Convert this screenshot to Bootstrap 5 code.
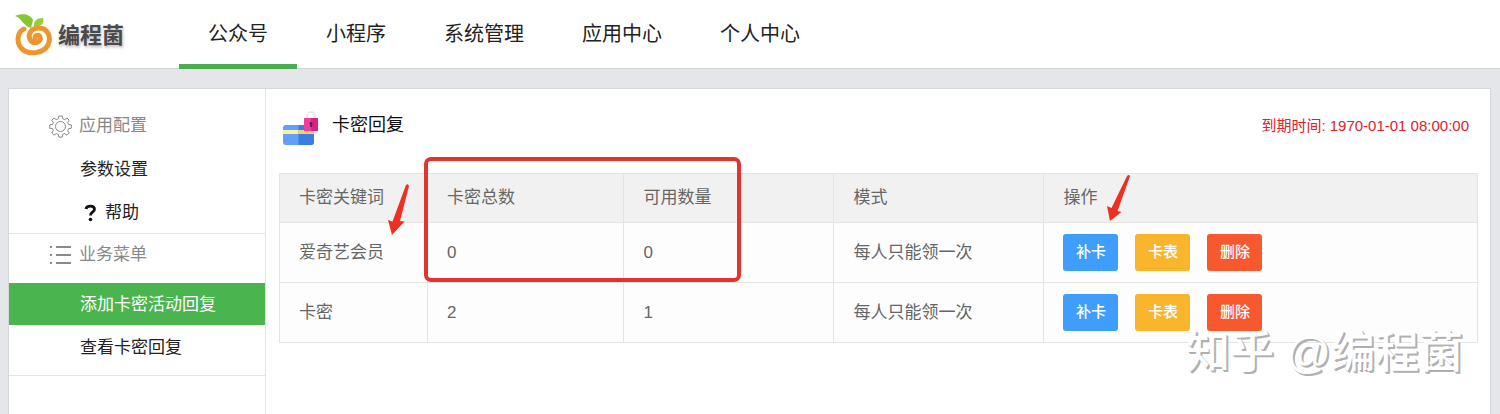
<!DOCTYPE html>
<html lang="zh-CN">
<head>
<meta charset="utf-8">
<meta name="viewport" content="width=device-width, initial-scale=1">
<title>卡密回复</title>
<link href="https://cdn.jsdelivr.net/npm/bootstrap@5.3.0/dist/css/bootstrap.min.css" rel="stylesheet">
<style>
  body { font-family: "Liberation Sans", "Noto Sans CJK SC", sans-serif; font-size: 17px; line-height: 24px; background: #e5e6ea; color: #222; }
  .site-header { height: 69px; background: #fff; border-bottom: 1px solid #d3d4d6; }
  .brand-link { width: 179px; padding-left: 14px; }
  .brand-name { padding-top: 3px; font-size: 22px; font-weight: 700; color: #4a4a4a; text-shadow: 1px 2px 3px #bbb; }
  .main-nav .nav-link { height: 69px; padding: 22px 29px 0; font-size: 20px; color: #222; border-bottom: 5px solid transparent; }
  .main-nav .nav-link.active { border-bottom-color: #4bae50; }
  .panel { margin: 19px 9px 0 8px; background: #fff; border: 1px solid #d6d7da; border-bottom: 0; }
  .side-menu { width: 257px; border-right: 1px solid #e4e5e7; }
  .side-group { border-bottom: 1px solid #e4e5e7; }
  .side-group:first-child { padding-top: 16px; }
  .side-group:last-child { padding-bottom: 7px; }
  .side-title { height: 42px; padding-left: 40px; font-size: 17px; font-weight: 400; line-height: 24px; color: #888; }
  .side-title svg { margin-right: 7px; }
  .side-item { height: 43px; padding: 2px 0 0 71px; color: #222; text-decoration: none; }
  .side-item.active { height: 42px; margin-top: 7px; background: #4ab54e; color: #fff; }
  .content-area { padding: 17px 12px 0 13px; min-width: 0; }
  .content-head { height: 40px; margin-bottom: 27px; padding: 0 9px 0 4px; }
  .card-icon { margin-top: 4px; }
  .page-title { font-size: 18px; font-weight: 400; color: #111; }
  .expiry { font-size: 15px; color: #d9232e; }
  .key-table { table-layout: fixed; border-color: #e4e4e4; }
  .key-table > :not(caption) > * > * { padding: 11px 19px; color: #666; background: #fdfdfd; vertical-align: middle; font-weight: 400; }
  .key-table > thead > tr > th { padding: 12px 19px; background: #f1f1f1; }
  .col-key { width: 12.35%; } .col-total { width: 16.4%; } .col-usable, .col-mode { width: 17.53%; }
  .act { width: 55px; height: 37px; padding: 0; border: 0; border-radius: 3px; font-size: 15px; font-weight: 500; color: #fff; }
  .act-add { background: #3f9dfb; } .act-list { background: #f9b52b; } .act-del { background: #f8582e; }
  .acts { gap: 17px; }
  .note-box { left: 12.1%; top: -16px; width: 26.4%; height: 125px; border: 4px solid #e0352e; border-radius: 7px; }
  .note-arrow { top: 1px; }
  .arrow-key { left: 9%; } .arrow-act { left: 69%; }
  .watermark { right: 15px; top: 150px; font-size: 44px; font-weight: 500; line-height: 60px; color: #fff; text-shadow: 1px 1px 0 #b0b0b0, 2px 2px 0 #b0b0b0; pointer-events: none; }
</style>
</head>
<body class="min-vh-100 d-flex flex-column">
<header class="site-header d-flex">
  <a href="#" class="brand-link d-flex align-items-center text-decoration-none flex-shrink-0">
    <svg width="40" height="44" viewBox="0 0 40 44" aria-hidden="true">
      <path d="M1 4C8 1 16 2 19 8L17 16C10 15 8 6 1 4Z" fill="#86c62f"/>
      <path d="M20 15C19 9 23 6 29 6 31 11 27 15 20 15Z" fill="#97cf35"/>
      <path d="M10 17C3 20 2 31 8 37 15 43 29 42 34 33 38 24 33 16 25 16 16 16 13 24 17 29 21 33 28 29 26 25 25 22 21 23 21 26" fill="none" stroke="#ec962f" stroke-width="5" stroke-linecap="round"/>
    </svg>
    <span class="brand-name ms-1">编程菌</span>
  </a>
  <nav class="nav main-nav flex-nowrap text-nowrap">
    <a class="nav-link active" href="#">公众号</a>
    <a class="nav-link" href="#">小程序</a>
    <a class="nav-link" href="#">系统管理</a>
    <a class="nav-link" href="#">应用中心</a>
    <a class="nav-link" href="#">个人中心</a>
  </nav>
</header>
<div class="panel d-flex flex-grow-1">
  <aside class="side-menu flex-shrink-0">
    <section class="side-group">
      <h2 class="side-title d-flex align-items-center m-0">
        <svg width="23" height="23" viewBox="0 0 23 23" fill="none" stroke="#8a8a8a" stroke-linejoin="round" aria-hidden="true">
          <circle cx="11.500" cy="11.500" r="5"/>
          <path d="M9.800 1h3.400l.5 2.800 2 .8L18 3l2.200 2.200-1.500 2.300.8 2 2.800.4v3.300l-2.800.5-.8 2 1.500 2.300L18 20.200l-2.300-1.600-2 .8-.5 2.700H9.800l-.5-2.700-2-.8L5 20.200 2.800 18l1.500-2.300-.8-2-2.800-.5V9.900l2.800-.4.8-2-1.500-2.300L5 3l2.300 1.600 2-.8Z"/>
        </svg>应用配置</h2>
      <a href="#" class="side-item d-flex align-items-center">参数设置</a>
      <a href="#" class="side-item d-flex align-items-center">
        <svg class="ms-1 me-2" width="13" height="18" viewBox="0 0 13 18" aria-hidden="true"><path d="M2 5C2.500 1 10.500 1 10.500 5.300 10.500 8 6.500 8 6.500 11.500" fill="none" stroke="#111" stroke-width="2.800"/><circle cx="6.500" cy="15.500" r="1.800" fill="#111"/></svg>帮助</a>
    </section>
    <section class="side-group">
      <h2 class="side-title d-flex align-items-center m-0">
        <svg width="23" height="20" viewBox="0 0 23 20" fill="#8a8a8a" aria-hidden="true"><path d="M1 1h2v2H1zM1 9h2v2H1zM1 17h2v2H1zM7 1h15v2H7zM7 9h15v2H7zM7 17h15v2H7z"/></svg>业务菜单</h2>
      <a href="#" class="side-item active d-flex align-items-center">添加卡密活动回复</a>
      <a href="#" class="side-item d-flex align-items-center">查看卡密回复</a>
    </section>
  </aside>
  <main class="content-area flex-grow-1">
    <div class="content-head d-flex align-items-center">
      <svg class="card-icon" width="37" height="36" viewBox="0 0 37 36" aria-hidden="true">
        <path d="M24 8V6a4 4 0 0 1 8 0v2" fill="none" stroke="#e8eaed" stroke-width="2"/>
        <rect y="15" width="31" height="20" rx="3" fill="#669df6"/>
        <path d="M15.500 15H28a3 3 0 0 1 3 3v14a3 3 0 0 1-3 3H15.500z" fill="#3b7de0"/>
        <path d="M0 20h15.500v4H0z" fill="#f5f3a0"/><path d="M15.500 20H31v4H15.500z" fill="#f3d06c"/>
        <rect x="21" y="8" width="14" height="13" fill="#f03c9a"/><path d="M28 8h7v13h-7z" fill="#e0207f"/>
        <path d="M28 12a1.500 1.500 0 0 1 1 2.700V17h-2v-2.300a1.500 1.500 0 0 1 1-2.700z" fill="#5d2457"/>
      </svg>
      <h1 class="page-title m-0 ms-2 ps-1">卡密回复</h1>
      <span class="expiry ms-auto text-nowrap">到期时间: 1970-01-01 08:00:00</span>
    </div>
    <div class="position-relative">
      <table class="table table-bordered key-table m-0">
        <thead><tr>
          <th scope="col" class="col-key">卡密关键词</th><th scope="col" class="col-total">卡密总数</th><th scope="col" class="col-usable">可用数量</th><th scope="col" class="col-mode">模式</th><th scope="col">操作</th>
        </tr></thead>
        <tbody>
          <tr><td>爱奇艺会员</td><td>0</td><td>0</td><td>每人只能领一次</td>
            <td><div class="acts d-flex"><button type="button" class="btn act act-add">补卡</button><button type="button" class="btn act act-list">卡表</button><button type="button" class="btn act act-del">删除</button></div></td></tr>
          <tr><td>卡密</td><td>2</td><td>1</td><td>每人只能领一次</td>
            <td><div class="acts d-flex"><button type="button" class="btn act act-add">补卡</button><button type="button" class="btn act act-list">卡表</button><button type="button" class="btn act act-del">删除</button></div></td></tr>
        </tbody>
      </table>
      <div class="note-box position-absolute"></div>
      <svg class="note-arrow arrow-key position-absolute" width="24" height="62" viewBox="0 0 24 62" aria-hidden="true"><path d="M19 11Q21 9 22 12L13 47l4.500.5L5 61 1 46l4.500 1.500Z" fill="#ee2f22"/></svg>
      <svg class="note-arrow arrow-act position-absolute" width="24" height="50" viewBox="0 0 24 50" aria-hidden="true"><path d="M21 2Q23 0 24 2L11.500 37l4 1L4 47 1 32l4.500 2Z" fill="#ee2f22"/></svg>
      <div class="watermark position-absolute text-nowrap">知乎 @编程菌</div>
    </div>
  </main>
</div>
<script src="https://cdn.jsdelivr.net/npm/bootstrap@5.3.0/dist/js/bootstrap.bundle.min.js"></script>
</body>
</html>
